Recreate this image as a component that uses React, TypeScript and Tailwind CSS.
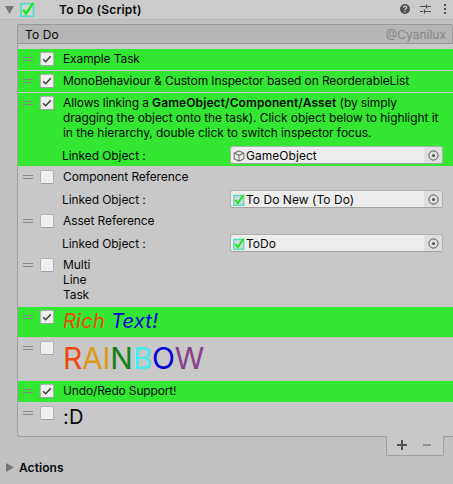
import type { ReactNode } from 'react';

function TodoIcon({ size }: { size: number }) {
  return (
    <svg width={size} height={size} viewBox="0 0 15 15" className="shrink-0">
      <rect x="1" y="1.8" width="12.4" height="12.4" fill="#cfd8d6" stroke="#50dcc8" strokeWidth="1.6" />
      <path d="M3.2 7.5 L6 11.6 L13.2 1" fill="none" stroke="#1fe61f" strokeWidth="2.4" />
    </svg>
  );
}

function CubeIcon() {
  return (
    <svg width="12" height="12" viewBox="0 0 12 12" className="shrink-0" fill="none" stroke="#707070" strokeWidth="1.1">
      <path d="M6 .9 L10.8 3 V8.8 L6 11.2 L1.2 8.8 V3 Z M1.2 3 L6 5.3 L10.8 3 M6 5.3 V11.2" />
    </svg>
  );
}

function Checkbox({ checked }: { checked?: boolean }) {
  return (
    <span className="flex h-3.5 w-3.5 shrink-0 items-center justify-center rounded-[2px] border border-[#b2b2b2] border-b-[#a0a0a0] bg-[#efefef]">
      {checked && (
        <svg width="10" height="10" viewBox="0 0 10 10" fill="none" stroke="#3c3c3c" strokeWidth="1.5">
          <path d="M1.2 5.2 L3.7 7.7 L8.8 2.3" />
        </svg>
      )}
    </span>
  );
}

function Handle() {
  return <span className="mt-[5px] h-1 w-2.5 shrink-0 border-y border-[#858585]" />;
}

function LinkedObject({ name, icon }: { name: string; icon: ReactNode }) {
  return (
    <div className="ml-[39px] flex h-[18px] items-center">
      <span className="w-[168px] shrink-0 tracking-[-0.08px]">Linked Object :</span>
      <div className="flex h-[18px] w-[213px] overflow-hidden rounded-[3px] border border-[#b0b0b0] border-b-[#a0a0a0] bg-[#ededed]">
        <div className="flex flex-1 items-center gap-px pl-[2px]">
          <span className="pt-px">{icon}</span>
          <span className="tracking-[0.04px]">{name}</span>
        </div>
        <div className="flex w-[18px] items-center justify-center bg-[#dedede]">
          <svg width="11" height="11" viewBox="0 0 11 11">
            <circle cx="5.5" cy="5.5" r="4.6" fill="none" stroke="#555" strokeWidth="1" />
            <circle cx="5.5" cy="5.5" r="1.5" fill="#555" />
          </svg>
        </div>
      </div>
    </div>
  );
}

function Task({ className, checked, children, link }: { className: string; checked?: boolean; children: ReactNode; link?: ReactNode }) {
  return (
    <div className={`flex flex-col justify-between pl-[5px] ${checked ? 'bg-[#32e632]' : ''} ${className}`}>
      <div className="flex">
        <Handle />
        <span className="ml-[7px] mr-[9px]"><Checkbox checked={checked} /></span>
        <div className="-mt-px whitespace-nowrap tracking-[-0.11px]">{children}</div>
      </div>
      {link}
    </div>
  );
}

export default function App() {
  return (
    <div className="h-[484px] w-[453px] overflow-hidden bg-[#c2c2c2] font-['Inter',sans-serif] text-[12px] leading-[15px] text-[#090909]">
      <header className="flex h-5 items-center border-b border-[#bababa] bg-[#cbcbcb] pl-[5px]">
        <svg width="9" height="8" viewBox="0 0 9 8"><path d="M0 0H9L4.5 8Z" fill="#7b7777" /></svg>
        <span className="ml-[6px]"><TodoIcon size={15} /></span>
        <span className="ml-6 font-semibold tracking-[0.2px]">To Do (Script)</span>
        <div className="ml-auto flex items-center gap-[10px] pb-px pr-[4px]">
          <svg width="10" height="10" viewBox="0 0 10 10">
            <circle cx="5" cy="5" r="5" fill="#505050" />
            <path d="M3.4 3.8C3.4 1.7 6.7 1.7 6.7 3.7C6.7 4.8 5 4.8 5 6.2M5 7V8.2" fill="none" stroke="#d0d0d0" strokeWidth="1.2" />
          </svg>
          <svg width="11" height="10" viewBox="0 0 11 10" fill="none" stroke="#505050">
            <path d="M0 2.5H6M7 2.5H11M6.5 .5V4.5M0 7.5H3M5 7.5H11M4.5 5.5V9.5" strokeWidth="1.2" />
          </svg>
          <svg width="8" height="10" viewBox="0 0 8 10" fill="#505050">
            <path d="M3 0h2v2H3zM3 4h2v2H3zM3 8h2v2H3z" />
          </svg>
        </div>
      </header>

      <main className="ml-[17px] mt-1">
        <div className="flex h-5 items-center justify-between rounded-t-[2px] border border-[#999] bg-[#b5b5b5] pl-[7px] pr-1.5">
          <span className="pt-px tracking-[0.1px]">To Do</span>
          <span className="pt-px text-[#858585]">@Cyanilux</span>
        </div>
        <div className="h-[393px] rounded-bl-[3px] border-b border-l border-[#a0a0a0] bg-[#c8c8c8] pt-[5px]">
          <Task checked className="h-[21px] pt-[3px]">Example Task</Task>
          <Task checked className="mt-px h-[21px] pt-[3px]">MonoBehaviour &amp; Custom Inspector based on ReorderableList</Task>
          <Task checked className="mt-px h-[73px] pb-[2px] pt-[3px]" link={<LinkedObject name="GameObject" icon={<CubeIcon />} />}>
            Allows linking a <b className="font-semibold tracking-[0.1px]">GameObject/Component/Asset</b> (by simply<br />
            <span className="tracking-[-0.06px]">
              dragging the object onto the task). Click object below to highlight it<br />
              in the hierarchy, double click to switch inspector focus.
            </span>
          </Task>
          <Task className="h-[44px] pb-[2px] pt-1" link={<LinkedObject name="To Do New (To Do)" icon={<TodoIcon size={12} />} />}>Component Reference</Task>
          <Task className="h-[44px] pb-[2px] pt-1" link={<LinkedObject name="ToDo" icon={<TodoIcon size={12} />} />}>Asset Reference</Task>
          <Task className="h-[53px] pt-1">Multi<br />Line<br />Task</Task>
          <Task checked className="h-[30px] pt-[3px]">
            <div className="pt-px text-[20px] italic leading-[23px] tracking-[0.25px]">
              <span className="text-[#f04810]">Rich</span> <span className="text-[#0000dc]">Text!</span>
            </div>
          </Task>
          <Task className="h-[44px] pt-1">
            <div className="pt-[6px] text-[30px] leading-[25px] tracking-[-0.25px]">
              <span className="text-[#f04810]">R</span>
              <span className="text-[#dc9818]">AI</span>
              <span className="text-[#148014]">N</span>
              <span className="text-[#40f0f0]">B</span>
              <span className="text-[#0000dc]">O</span>
              <span className="text-[#884088]">W</span>
            </div>
          </Task>
          <Task checked className="h-[21px] pt-[3px]"><span className="tracking-[-0.15px]">Undo/Redo Support!</span></Task>
          <Task className="h-[34px] pt-1"><div className="pt-px text-[20px] leading-[23px] tracking-[0.3px]">:D</div></Task>
        </div>
        <div className="relative -mt-px ml-[369px] flex h-5 w-[58px] items-center rounded-b-[2px] border border-t-0 border-[#a0a0a0] bg-[#c8c8c8]">
          <svg width="56" height="19" viewBox="0 0 56 19">
            <path d="M10 9H20M15 4V14" stroke="#505050" strokeWidth="2" />
            <path d="M36 9H44" stroke="#909090" strokeWidth="2" />
          </svg>
        </div>
      </main>

      <footer className="mt-1 flex h-[15px] items-center pl-[6px]">
        <svg width="8" height="9" viewBox="0 0 8 9"><path d="M0 0L8 4.5L0 9Z" fill="#7b7777" /></svg>
        <span className="ml-[5px] font-semibold tracking-[0.06px]">Actions</span>
      </footer>
    </div>
  );
}
